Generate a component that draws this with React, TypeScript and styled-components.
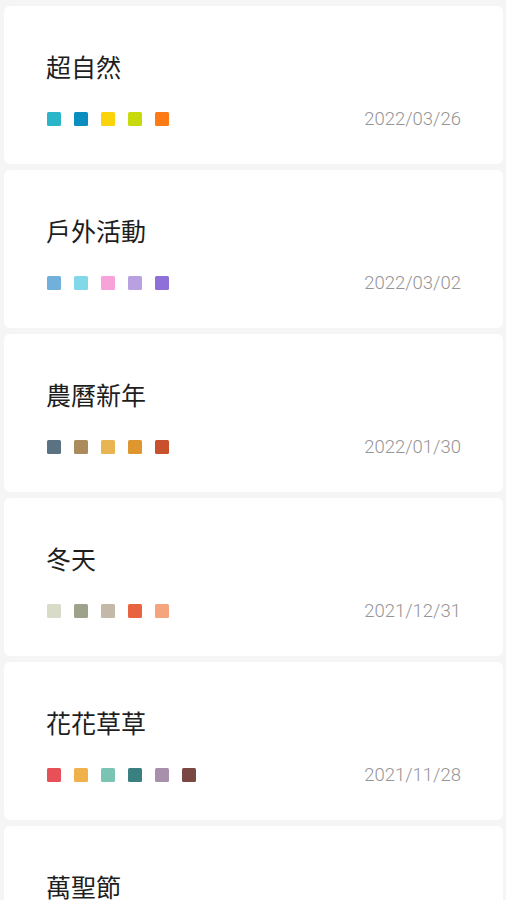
import React from 'react';
import styled, { createGlobalStyle } from 'styled-components';

interface paletteType {
  title: string;
  date: string;
  colors: string[];
}

const palettes: paletteType[] = [
  { title: '超自然', date: '2022/03/26', colors: ['#2bb5c8', '#0a8dbf', '#fbd30a', '#c8da0c', '#fd7a14'] },
  { title: '戶外活動', date: '2022/03/02', colors: ['#72b0dc', '#80d8e8', '#f7a2d8', '#b9a0e0', '#8f6fd8'] },
  { title: '農曆新年', date: '2022/01/30', colors: ['#5a7282', '#ab8a5c', '#e8b552', '#e0962f', '#c8502a'] },
  { title: '冬天', date: '2021/12/31', colors: ['#d8dbc8', '#9ca38a', '#c4b8a8', '#e86440', '#f5a47e'] },
  { title: '花花草草', date: '2021/11/28', colors: ['#e85058', '#f0b04a', '#7ac4b4', '#3a8080', '#a890ac', '#7a4840'] },
  { title: '萬聖節', date: '2021/10/31', colors: ['#f08a24', '#2d2d2d', '#7b4fa0', '#9ac43c', '#e8d9b0'] },
];

const App = () => {
  return (
    <>
      <GlobalStyle />
      <ListWrap>
        {palettes.map((p) => (
          <Card key={p.title}>
            <Title>{p.title}</Title>
            <BottomRow>
              <Swatches>
                {p.colors.map((c, i) => (
                  <Swatch key={i} color={c} />
                ))}
              </Swatches>
              <DateLabel>{p.date}</DateLabel>
            </BottomRow>
          </Card>
        ))}
      </ListWrap>
    </>
  );
};

export default App;

const GlobalStyle = createGlobalStyle`
  body {
    margin: 0;
    background: #f5f5f5;
    font-family: 'Noto Sans CJK TC', 'Noto Sans', sans-serif;
  }
`;

const ListWrap = styled.div`
  display: flex;
  flex-direction: column;
  gap: 6px;
  padding: 6px 3px 0 4px;
  height: 900px;
  overflow: hidden;
  box-sizing: border-box;
`;

const Card = styled.div`
  background: #fff;
  border-radius: 6px;
  height: 158px;
  flex-shrink: 0;
  box-sizing: border-box;
  padding: 44px 42px 0 42px;
`;

const Title = styled.div`
  font-size: 25px;
  line-height: 32px;
  color: #1e1e1e;
`;

const BottomRow = styled.div`
  display: flex;
  align-items: center;
  justify-content: space-between;
  margin-top: 30px;
  height: 14px;
`;

const Swatches = styled.div`
  display: flex;
  gap: 13px;
  padding-left: 1px;
`;

const Swatch = styled.span<{ color: string }>`
  width: 14px;
  height: 14px;
  border-radius: 1.5px;
  background: ${(props) => props.color};
`;

const DateLabel = styled.span`
  font-family: Roboto, 'Liberation Sans', sans-serif;
  font-size: 18.5px;
  font-weight: 300;
  color: #959595;
`;
